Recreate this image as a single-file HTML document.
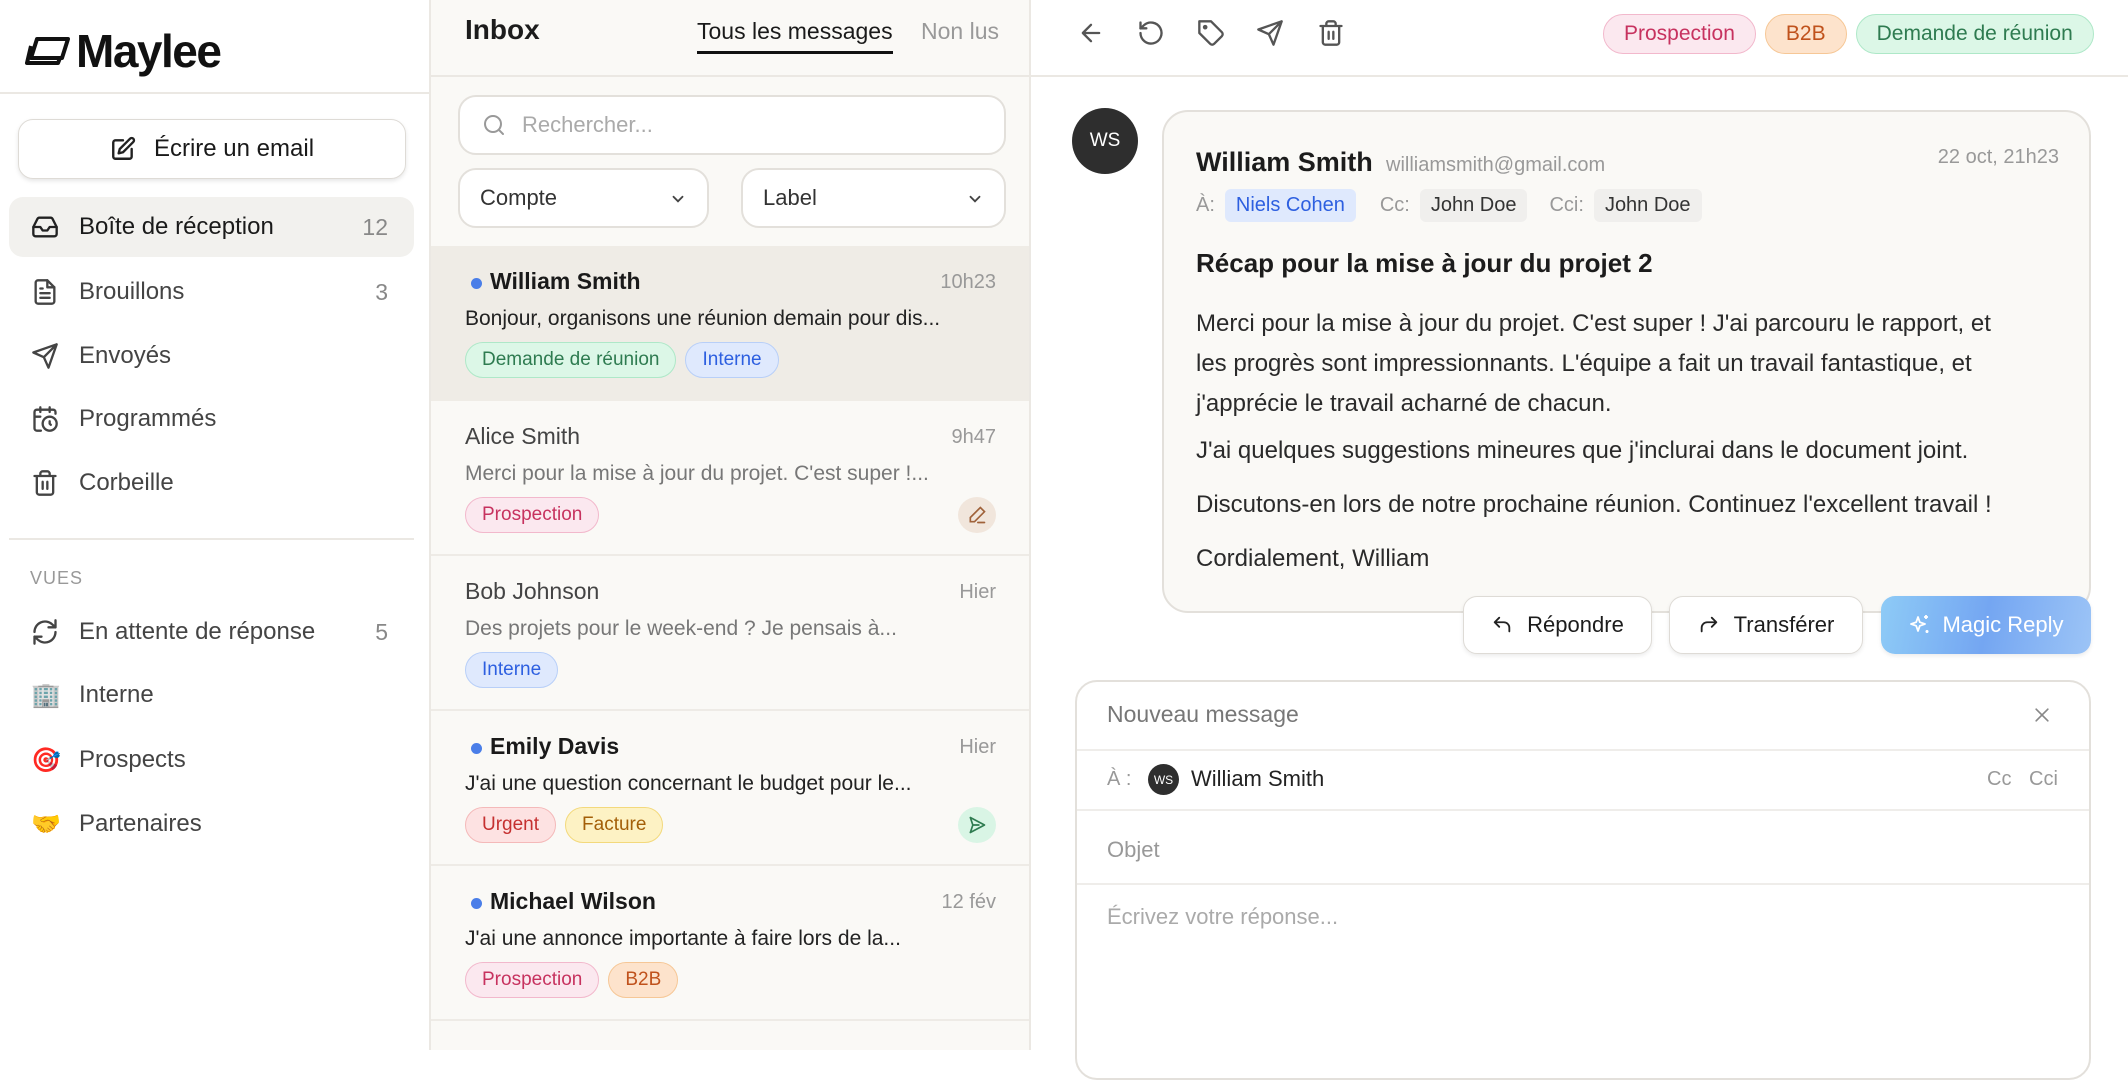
<!DOCTYPE html>
<html><head><meta charset="utf-8"><style>
*{box-sizing:border-box;margin:0;padding:0}
body{width:2128px;height:1050px;overflow:hidden;font-family:"Liberation Sans","DejaVu Sans",sans-serif;background:#fff;color:#1c1c1c;position:relative}
.a{position:absolute}
.side{left:0;top:0;width:431px;height:1050px;background:#fff;border-right:2px solid #ebe8e3}
.mid{left:431px;top:0;width:600px;height:1050px;background:#faf9f6;border-right:2px solid #ebe8e3}
.right{left:1031px;top:0;width:1097px;height:1050px;background:#fff}
.nav{left:9px;width:405px;height:60px;border-radius:14px;display:flex;align-items:center;padding-left:22px;font-size:24px;color:#444}
.nav svg{width:28px;height:28px;margin-right:20px;stroke:#444;fill:none;stroke-width:2;stroke-linecap:round;stroke-linejoin:round}
.nav .n{position:absolute;right:26px;color:#888;font-size:23px}
.emo{width:28px;margin-right:20px;font-size:24px;text-align:center}
.tag{display:inline-flex;align-items:center;height:36px;border-radius:18px;padding:0 16px;font-size:19px;border:1.5px solid;margin-right:9px}
.g{background:#dcf7e7;border-color:#aee8c8;color:#2e7b50}
.b{background:#dfe9fd;border-color:#b8cff8;color:#2d5fe0}
.p{background:#fbe8ef;border-color:#f2b8cc;color:#c7325f}
.o{background:#fde3cc;border-color:#f6c796;color:#c0521c}
.r{background:#fde2e2;border-color:#f4b9b9;color:#c53030}
.y{background:#fdf2c4;border-color:#f3d97c;color:#a35f08}
.row{left:0;width:598px;height:155px;border-bottom:2px solid #eeebe6}
.row .nm{position:absolute;left:34px;top:22px;font-size:23px;color:#444}
.row .nm.u{font-weight:bold;color:#1a1a1a;left:59px}
.row .dot{position:absolute;left:40px;top:32px;width:11px;height:11px;border-radius:50%;background:#4a7ee8}
.row .tm{position:absolute;right:33px;top:25px;font-size:20px;color:#999}
.row .pv{position:absolute;left:34px;top:61px;font-size:21px;color:#777;white-space:nowrap}
.row .pv.u{color:#222}
.row .tg{position:absolute;left:34px;top:96px;display:flex}
.ic{position:absolute;right:33px;top:96px;width:38px;height:36px;border-radius:50%;display:flex;align-items:center;justify-content:center}
.tb svg{position:absolute;top:19px;width:28px;height:28px;fill:none;stroke:#555;stroke-width:2;stroke-linecap:round;stroke-linejoin:round}
.btn{top:596px;height:58px;border:1.5px solid #dedbd6;border-radius:14px;background:#fff;display:flex;align-items:center;justify-content:center;font-size:22px;box-shadow:0 2px 4px rgba(0,0,0,.08)}
.body{font-size:24px;color:#2a2a2a;left:1196px;white-space:nowrap}
.tt{height:40px;border-radius:20px;font-size:21px;padding:0 20px}
</style></head><body>

<div class="a side"></div>
<div class="a mid"></div>
<div class="a right"></div>

<!-- sidebar -->
<div class="a" style="left:25px;top:24px;display:flex;align-items:center">
<svg width="46" height="30" viewBox="0 0 46 30" fill="none" stroke="#111" stroke-width="4" stroke-linejoin="round"><path d="M12 3h31l-6 19H6z"/><path d="M6 10L2 27h31l2-5"/></svg>
<span style="font-size:46px;font-weight:bold;letter-spacing:-1.5px;margin-left:5px;color:#111">Maylee</span></div>
<div class="a" style="left:0;top:92px;width:431px;height:2px;background:#ebe8e3"></div>
<div class="a" style="left:18px;top:119px;width:388px;height:60px;border:1.5px solid #dedbd6;border-radius:15px;box-shadow:0 2px 4px rgba(0,0,0,.1);display:flex;align-items:center;justify-content:center;font-size:24px;color:#1a1a1a">
<svg width="26" height="26" viewBox="0 0 24 24" fill="none" stroke="#222" stroke-width="2.2" stroke-linecap="round" stroke-linejoin="round" style="margin-right:18px"><path d="M12 4H5a2 2 0 0 0-2 2v13a2 2 0 0 0 2 2h13a2 2 0 0 0 2-2v-7"/><path d="M18.5 2.5a2.1 2.1 0 0 1 3 3L12 15l-4 1 1-4z"/></svg>Écrire un email</div>

<div class="a nav" style="top:197px;background:#f2f1ee;color:#1a1a1a"><svg viewBox="0 0 24 24" style="stroke:#222"><path d="M22 12h-6l-2 3h-4l-2-3H2"/><path d="M5.5 5.1L2 12v6a2 2 0 0 0 2 2h16a2 2 0 0 0 2-2v-6l-3.5-6.9A2 2 0 0 0 16.8 4H7.2a2 2 0 0 0-1.7 1.1z"/></svg>Boîte de réception<span class="n">12</span></div>
<div class="a nav" style="top:262px"><svg viewBox="0 0 24 24"><path d="M14 2H6a2 2 0 0 0-2 2v16a2 2 0 0 0 2 2h12a2 2 0 0 0 2-2V8z"/><path d="M14 2v6h6M16 13H8M16 17H8M10 9H8"/></svg>Brouillons<span class="n">3</span></div>
<div class="a nav" style="top:326px"><svg viewBox="0 0 24 24"><path d="M22 2L11 13M22 2l-7 20-4-9-9-4z"/></svg>Envoyés</div>
<div class="a nav" style="top:389px"><svg viewBox="0 0 24 24"><path d="M21 7.5V6a2 2 0 0 0-2-2H5a2 2 0 0 0-2 2v14a2 2 0 0 0 2 2h3.5M16 2v4M8 2v4M3 10h5"/><circle cx="16" cy="16" r="6"/><path d="M16 14v2l1 1"/></svg>Programmés</div>
<div class="a nav" style="top:453px"><svg viewBox="0 0 24 24"><path d="M3 6h18M19 6v14a2 2 0 0 1-2 2H7a2 2 0 0 1-2-2V6M8 6V4a2 2 0 0 1 2-2h4a2 2 0 0 1 2 2v2M10 11v6M14 11v6"/></svg>Corbeille</div>
<div class="a" style="left:9px;top:538px;width:405px;height:2px;background:#ebe8e3"></div>
<div class="a" style="left:30px;top:568px;font-size:18px;color:#999;letter-spacing:1px">VUES</div>
<div class="a nav" style="top:602px"><svg viewBox="0 0 24 24"><path d="M21 2v6h-6M3 12a9 9 0 0 1 15-6.7L21 8M3 22v-6h6M21 12a9 9 0 0 1-15 6.7L3 16"/></svg>En attente de réponse<span class="n">5</span></div>
<div class="a nav" style="top:665px"><span class="emo">🏢</span>Interne</div>
<div class="a nav" style="top:730px"><span class="emo">🎯</span>Prospects</div>
<div class="a nav" style="top:794px"><span class="emo">🤝</span>Partenaires</div>

<!-- middle -->
<div class="a" style="left:465px;top:14px;font-size:28px;font-weight:bold">Inbox</div>
<div class="a" style="left:697px;top:18px;font-size:23px;color:#1a1a1a;border-bottom:3px solid #111;padding-bottom:6px">Tous les messages</div>
<div class="a" style="left:921px;top:18px;font-size:23px;color:#999">Non lus</div>
<div class="a" style="left:431px;top:75px;width:600px;height:2px;background:#ebe8e3"></div>
<div class="a" style="left:458px;top:95px;width:548px;height:60px;border:2px solid #e3e0db;border-radius:18px;background:#fff;display:flex;align-items:center;padding-left:22px;font-size:22px;color:#aaa">
<svg width="24" height="24" viewBox="0 0 24 24" fill="none" stroke="#999" stroke-width="2" stroke-linecap="round" style="margin-right:16px"><circle cx="11" cy="11" r="8"/><path d="M21 21l-4.3-4.3"/></svg>Rechercher...</div>
<div class="a" style="left:458px;top:168px;width:251px;height:60px;border:2px solid #e3e0db;border-radius:18px;background:#fff;display:flex;align-items:center;padding-left:20px;font-size:22px;color:#333">Compte<svg class="a" style="right:20px;top:20px" width="18" height="18" viewBox="0 0 24 24" fill="none" stroke="#444" stroke-width="2.5" stroke-linecap="round"><path d="M6 9l6 6 6-6"/></svg></div>
<div class="a" style="left:741px;top:168px;width:265px;height:60px;border:2px solid #e3e0db;border-radius:18px;background:#fff;display:flex;align-items:center;padding-left:20px;font-size:22px;color:#333">Label<svg class="a" style="right:20px;top:20px" width="18" height="18" viewBox="0 0 24 24" fill="none" stroke="#444" stroke-width="2.5" stroke-linecap="round"><path d="M6 9l6 6 6-6"/></svg></div>

<div class="a" style="left:431px;top:246px;width:598px">
<div class="a row" style="top:0;background:#efece6;border-bottom:none"><span class="dot"></span><span class="nm u">William Smith</span><span class="tm">10h23</span><span class="pv u">Bonjour, organisons une réunion demain pour dis...</span><div class="tg"><span class="tag g">Demande de réunion</span><span class="tag b">Interne</span></div></div>
<div class="a row" style="top:155px"><span class="nm">Alice Smith</span><span class="tm">9h47</span><span class="pv">Merci pour la mise à jour du projet. C'est super !...</span><div class="tg"><span class="tag p">Prospection</span></div><div class="ic" style="background:#f1e6dc"><svg width="20" height="20" viewBox="0 0 24 24" fill="none" stroke="#a0623a" stroke-width="2" stroke-linecap="round"><path d="M16 3l5 5L9 20H4v-5zM13 21h8"/></svg></div></div>
<div class="a row" style="top:310px"><span class="nm">Bob Johnson</span><span class="tm">Hier</span><span class="pv">Des projets pour le week-end ? Je pensais à...</span><div class="tg"><span class="tag b">Interne</span></div></div>
<div class="a row" style="top:465px"><span class="dot"></span><span class="nm u">Emily Davis</span><span class="tm">Hier</span><span class="pv u">J'ai une question concernant le budget pour le...</span><div class="tg"><span class="tag r">Urgent</span><span class="tag y">Facture</span></div><div class="ic" style="background:#d9f5e5"><svg width="20" height="20" viewBox="0 0 24 24" fill="none" stroke="#2e7b50" stroke-width="2" stroke-linejoin="round"><path d="M4 3l17 9-17 9 3-9zM7 12h8"/></svg></div></div>
<div class="a row" style="top:620px"><span class="dot"></span><span class="nm u">Michael Wilson</span><span class="tm">12 fév</span><span class="pv u">J'ai une annonce importante à faire lors de la...</span><div class="tg"><span class="tag p">Prospection</span><span class="tag o">B2B</span></div></div>
</div>

<!-- right toolbar -->
<div class="tb">
<svg style="left:1077px" viewBox="0 0 24 24"><path d="M19 12H5M12 19l-7-7 7-7"/></svg>
<svg style="left:1137px" viewBox="0 0 24 24"><path d="M3 12a9 9 0 1 0 3-6.7L3 8"/><path d="M3 3v5h5"/></svg>
<svg style="left:1197px" viewBox="0 0 24 24"><path d="M12 2H2v10l9.3 9.3a2.4 2.4 0 0 0 3.4 0l6.6-6.6a2.4 2.4 0 0 0 0-3.4z"/><circle cx="7" cy="7" r="1"/></svg>
<svg style="left:1256px" viewBox="0 0 24 24"><path d="M22 2L11 13M22 2l-7 20-4-9-9-4z"/></svg>
<svg style="left:1317px" viewBox="0 0 24 24"><path d="M3 6h18M19 6v14a2 2 0 0 1-2 2H7a2 2 0 0 1-2-2V6M8 6V4a2 2 0 0 1 2-2h4a2 2 0 0 1 2 2v2M10 11v6M14 11v6"/></svg>
</div>
<div class="a" style="left:1603px;top:14px;display:flex"><span class="tag p tt">Prospection</span><span class="tag o tt">B2B</span><span class="tag g tt">Demande de réunion</span></div>
<div class="a" style="left:1031px;top:75px;width:1097px;height:2px;background:#ebe8e3"></div>

<!-- message -->
<div class="a" style="left:1072px;top:108px;width:66px;height:66px;border-radius:50%;background:#2e2e2e;color:#fff;font-size:19px;display:flex;align-items:center;justify-content:center">WS</div>
<div class="a" style="left:1162px;top:110px;width:929px;height:503px;border:2px solid #e3e0db;border-radius:26px;background:#faf9f6"></div>
<div class="a" style="left:1196px;top:147px;font-size:27px;font-weight:bold">William Smith</div>
<div class="a" style="left:1386px;top:154px;font-size:20px;color:#999">williamsmith@gmail.com</div>
<div class="a" style="right:69px;top:146px;font-size:20px;color:#999">22 oct, 21h23</div>
<div class="a" style="left:1196px;top:189px;display:flex;align-items:center;font-size:20px;color:#999">À:<span style="margin:0 24px 0 10px;background:#dfe9fd;color:#2d5fe0;padding:5px 11px;border-radius:6px;color:#2d5fe0">Niels Cohen</span>Cc:<span style="margin:0 22px 0 10px;background:#f0efed;color:#333;padding:5px 11px;border-radius:6px">John Doe</span>Cci:<span style="margin-left:10px;background:#f0efed;color:#333;padding:5px 11px;border-radius:6px">John Doe</span></div>
<div class="a" style="left:1196px;top:248px;font-size:26px;font-weight:bold">Récap pour la mise à jour du projet 2</div>
<div class="a body" style="top:304px;line-height:40px">Merci pour la mise à jour du projet. C'est super ! J'ai parcouru le rapport, et<br>les progrès sont impressionnants. L'équipe a fait un travail fantastique, et<br>j'apprécie le travail acharné de chacun.</div>
<div class="a body" style="top:437px">J'ai quelques suggestions mineures que j'inclurai dans le document joint.</div>
<div class="a body" style="top:491px">Discutons-en lors de notre prochaine réunion. Continuez l'excellent travail !</div>
<div class="a body" style="top:545px">Cordialement, William</div>

<div class="a btn" style="left:1463px;width:189px"><svg width="22" height="22" viewBox="0 0 24 24" fill="none" stroke="#222" stroke-width="2" stroke-linecap="round" stroke-linejoin="round" style="margin-right:14px"><path d="M9 14L4 9l5-5M4 9h10a6 6 0 0 1 6 6v4"/></svg>Répondre</div>
<div class="a btn" style="left:1669px;width:194px"><svg width="22" height="22" viewBox="0 0 24 24" fill="none" stroke="#222" stroke-width="2" stroke-linecap="round" stroke-linejoin="round" style="margin-right:14px"><path d="M15 14l5-5-5-5M20 9H10a6 6 0 0 0-6 6v4"/></svg>Transférer</div>
<div class="a btn" style="left:1881px;width:210px;border:none;background:linear-gradient(100deg,#8ecbf6,#74a6f2 50%,#9cc4f6);color:#fff"><svg width="24" height="24" viewBox="0 0 24 24" fill="none" stroke="#fff" stroke-width="1.8" stroke-linejoin="round" style="margin-right:10px"><path d="M10 4l1.8 5.2L17 11l-5.2 1.8L10 18l-1.8-5.2L3 11l5.2-1.8z"/><path d="M18 2v4M16 4h4M19 17v3M17.5 18.5h3"/></svg>Magic Reply</div>

<!-- compose -->
<div class="a" style="left:1075px;top:680px;width:1016px;height:400px;border:2px solid #e3e0db;border-radius:22px;background:#fff"></div>
<div class="a" style="left:1107px;top:701px;font-size:23px;color:#777">Nouveau message</div>
<svg class="a" style="left:2032px;top:705px" width="20" height="20" viewBox="0 0 24 24" fill="none" stroke="#888" stroke-width="2" stroke-linecap="round"><path d="M5 5l14 14M19 5L5 19"/></svg>
<div class="a" style="left:1077px;top:749px;width:1012px;height:2px;background:#efedea"></div>
<div class="a" style="left:1107px;top:768px;font-size:20px;color:#999">À :</div>
<div class="a" style="left:1148px;top:764px;width:31px;height:31px;border-radius:50%;background:#2e2e2e;color:#fff;font-size:12px;display:flex;align-items:center;justify-content:center">WS</div>
<div class="a" style="left:1191px;top:766px;font-size:22px;color:#222">William Smith</div>
<div class="a" style="left:1987px;top:768px;font-size:20px;color:#999">Cc</div>
<div class="a" style="left:2029px;top:768px;font-size:20px;color:#999">Cci</div>
<div class="a" style="left:1077px;top:809px;width:1012px;height:2px;background:#efedea"></div>
<div class="a" style="left:1107px;top:837px;font-size:22px;color:#999">Objet</div>
<div class="a" style="left:1077px;top:883px;width:1012px;height:2px;background:#efedea"></div>
<div class="a" style="left:1107px;top:904px;font-size:22px;color:#aaa">Écrivez votre réponse...</div>
</body></html>
